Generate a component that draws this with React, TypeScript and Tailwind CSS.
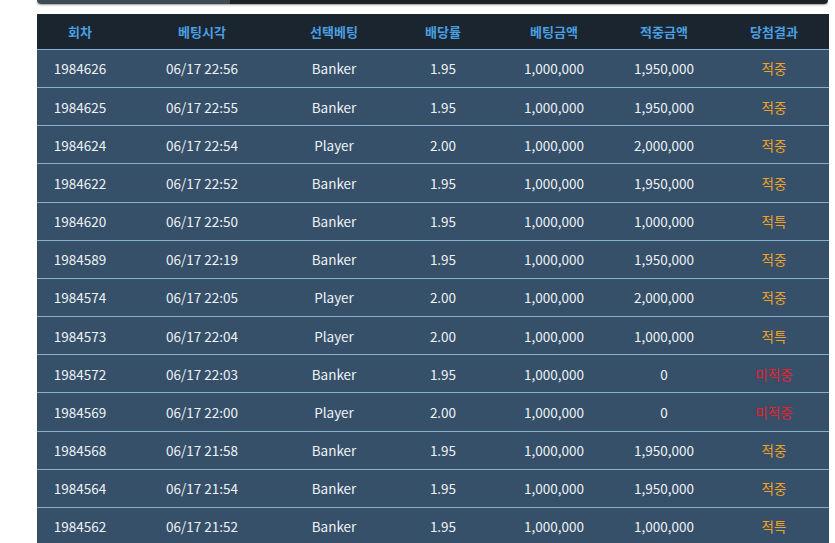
import React from "react";

type Row = [string, string, string, string, string, string, string];

const rows: Row[] = [
  ["1984626", "06/17 22:56", "Banker", "1.95", "1,000,000", "1,950,000", "적중"],
  ["1984625", "06/17 22:55", "Banker", "1.95", "1,000,000", "1,950,000", "적중"],
  ["1984624", "06/17 22:54", "Player", "2.00", "1,000,000", "2,000,000", "적중"],
  ["1984622", "06/17 22:52", "Banker", "1.95", "1,000,000", "1,950,000", "적중"],
  ["1984620", "06/17 22:50", "Banker", "1.95", "1,000,000", "1,000,000", "적특"],
  ["1984589", "06/17 22:19", "Banker", "1.95", "1,000,000", "1,950,000", "적중"],
  ["1984574", "06/17 22:05", "Player", "2.00", "1,000,000", "2,000,000", "적중"],
  ["1984573", "06/17 22:04", "Player", "2.00", "1,000,000", "1,000,000", "적특"],
  ["1984572", "06/17 22:03", "Banker", "1.95", "1,000,000", "0", "미적중"],
  ["1984569", "06/17 22:00", "Player", "2.00", "1,000,000", "0", "미적중"],
  ["1984568", "06/17 21:58", "Banker", "1.95", "1,000,000", "1,950,000", "적중"],
  ["1984564", "06/17 21:54", "Banker", "1.95", "1,000,000", "1,950,000", "적중"],
  ["1984562", "06/17 21:52", "Banker", "1.95", "1,000,000", "1,000,000", "적특"],
];

const headers = ["회차", "베팅시각", "선택베팅", "배당률", "베팅금액", "적중금액", "당첨결과"];
const widths = ["w-[86px]", "w-[158px]", "w-[106px]", "w-[112px]", "w-[110px]", "w-[110px]", "w-[110px]"];

export default function App() {
  return (
    <div
      className="w-[835px] h-[543px] overflow-hidden bg-white"
      style={{ fontFamily: '"Noto Sans CJK KR", "Noto Sans", sans-serif' }}
    >
      <div className="ml-[37px] w-[791px] h-[4px] rounded-b-[6px] flex overflow-hidden shadow-[0_1px_2px_rgba(0,0,0,0.4)]">
        <div className="w-[193px] bg-[#3e4a54]" />
        <div className="flex-1 bg-[#1f2124]" />
      </div>
      <div className="ml-[37px] mt-[10px] w-[792px]">
        <div className="flex h-[35px] bg-[#1b2530] items-center">
          {headers.map((h, i) => (
            <div
              key={h}
              className={`${widths[i]} text-center text-[13px] font-bold text-[#4a9fe0]`}
            >
              {h}
            </div>
          ))}
        </div>
        {rows.map((r) => (
          <div
            key={r[0]}
            className="flex h-[38.17px] border-t border-[#86b1cf] bg-[#36506a] items-center"
          >
            {r.map((c, i) => {
              let color = "text-[#eef2f5]";
              if (i === 6) color = c === "미적중" ? "text-[#e8202c]" : "text-[#f0a128]";
              return (
                <div key={i} className={`${widths[i]} text-center text-[13.5px] ${color}`}>
                  {c}
                </div>
              );
            })}
          </div>
        ))}
      </div>
    </div>
  );
}
